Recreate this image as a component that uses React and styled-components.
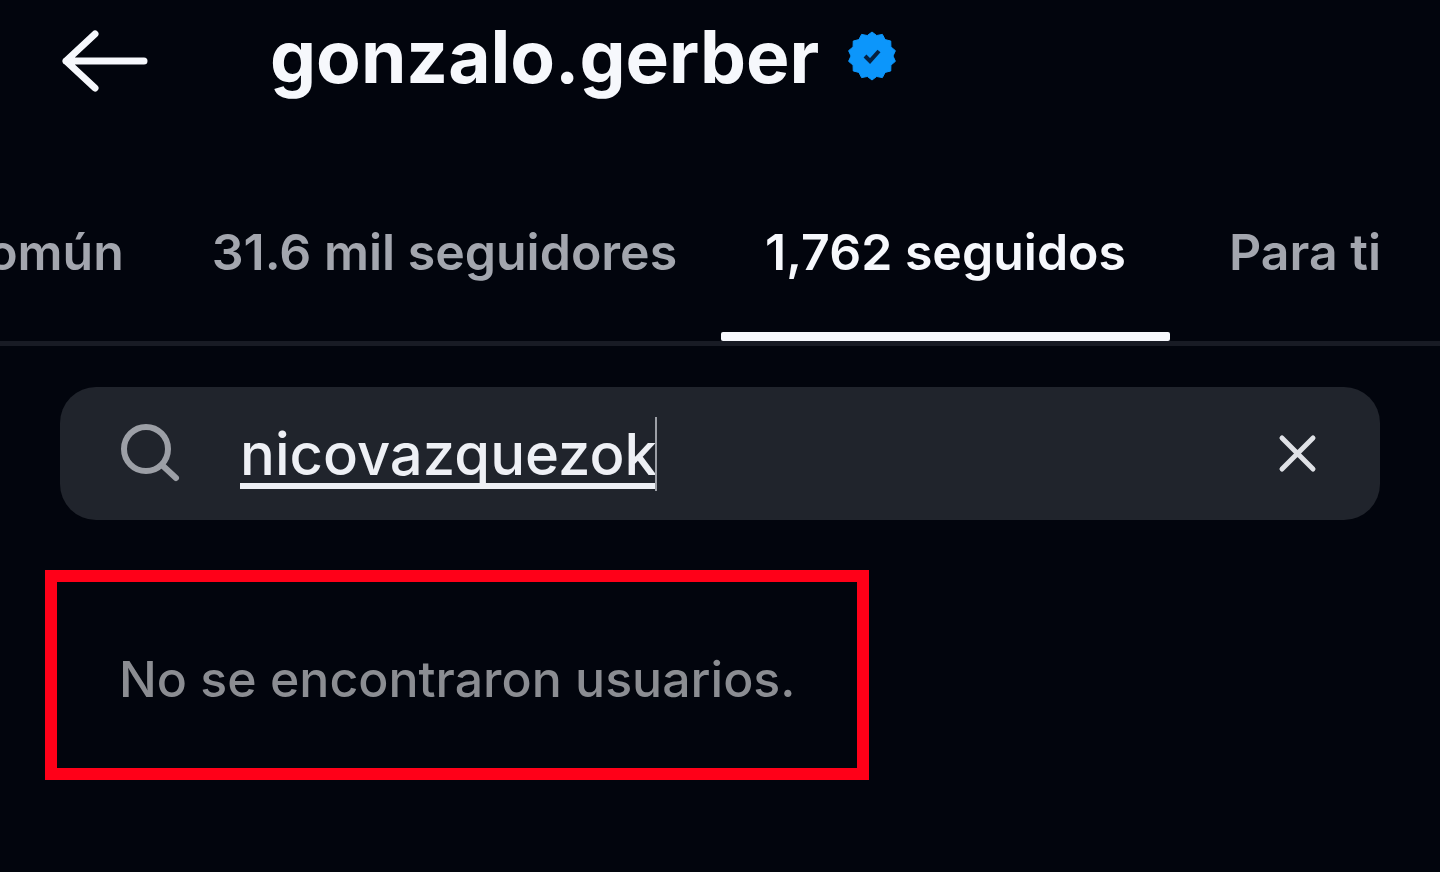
import React, { useState } from "react";
import styled, { createGlobalStyle } from "styled-components";

const GlobalStyle = createGlobalStyle`
  *, *::before, *::after { box-sizing: border-box; }
  body {
    margin: 0;
    background: #02050d;
    color: #f6f8fc;
    font-family: Inter, "Liberation Sans", sans-serif;
    font-weight: 500;
  }
`;

const Page = styled.div`
  min-height: 100vh;
  overflow: hidden;
`;

const Header = styled.header`
  display: flex;
  align-items: center;
  height: 122px;
  padding: 0 60px;
`;

const IconButton = styled.button`
  display: flex;
  flex: none;
  padding: 0;
  border: 0;
  background: none;
  color: ${(p) => p.$color};
  cursor: pointer;
`;

const Username = styled.h1`
  margin: 0 28px 0 120px;
  font-size: 73px;
  font-weight: 700;
  line-height: 114px;
  align-self: flex-start;
`;

const Badge = styled.svg`
  flex: none;
  align-self: flex-start;
  margin-top: 31px;
`;

const Tabs = styled.nav`
  display: flex;
  justify-content: flex-end;
  height: 224px;
  padding-top: 56px;
  overflow: hidden;
  border-bottom: 5px solid #181b24;
`;

const Tab = styled.button`
  position: relative;
  flex: none;
  min-width: ${(p) => (p.$wide ? "270px" : "0")};
  margin: 0;
  padding: 0 44px 16px;
  border: 0;
  background: none;
  color: ${(p) => (p.$active ? "#f6f8fc" : "#a3a6ae")};
  font: inherit;
  font-size: 50px;
  font-weight: 600;
  white-space: nowrap;
  cursor: pointer;

  &::after {
    content: "";
    display: ${(p) => (p.$active ? "block" : "none")};
    position: absolute;
    inset: auto 0 0;
    height: 9px;
    border-radius: 2px;
    background: #f6f8fc;
  }
`;

const SearchBar = styled.form`
  display: flex;
  align-items: center;
  height: 133px;
  margin: 41px 60px 50px;
  padding: 0 60px;
  border-radius: 36px;
  background: #20242c;
`;

const SearchLabel = styled.label`
  display: flex;
  flex: none;
  margin-right: 60px;
  color: #9c9fa6;
`;

const SearchInput = styled.input`
  field-sizing: content;
  min-width: 0;
  height: 80px;
  padding: 0;
  border: 0;
  outline: 0;
  background: none;
  color: #eef0f5;
  font: inherit;
  font-size: 58px;
  text-decoration: underline;
  text-decoration-thickness: 6px;
  text-decoration-skip-ink: none;
  text-underline-offset: 8px;
`;

const Caret = styled.span`
  flex: none;
  width: 2px;
  height: 74px;
  margin: 0 auto 0 -2px;
  background: #9c9fa6;
`;

const Notice = styled.p`
  width: fit-content;
  margin: 0 0 0 45px;
  padding: 66px 62px 58px;
  border: 12px solid #ff0018;
  color: #8b8d92;
  font-size: 50px;
  line-height: 62px;
`;

const tabs = ["común", "31.6 mil seguidores", "1,762 seguidos", "Para ti"];

const badgePoints = Array.from({ length: 28 }, (_, i) => {
  const radius = i % 2 ? 21 : 24;
  const angle = (i * Math.PI) / 14 - Math.PI / 2;
  return `${25 + radius * Math.cos(angle)},${25 + radius * Math.sin(angle)}`;
}).join(" ");

export default function App() {
  const [active, setActive] = useState("1,762 seguidos");
  const [query, setQuery] = useState("nicovazquezok");

  return (
    <Page>
      <GlobalStyle />
      <Header>
        <IconButton $color="#f6f8fc" aria-label="Volver">
          <svg width="90" height="64" viewBox="0 0 90 64" fill="none" stroke="currentColor" strokeWidth="7" strokeLinecap="round" strokeLinejoin="round">
            <path d="M84 32H6M35 5L6 32L35 59" />
          </svg>
        </IconButton>
        <Username>gonzalo.gerber</Username>
        <Badge width="50" height="50" viewBox="0 0 50 50" role="img" aria-label="Verificado">
          <polygon points={badgePoints} fill="#0c96fb" stroke="#0c96fb" strokeWidth="1" strokeLinejoin="round" />
          <path d="M18 25L23 30L32 20" fill="none" stroke="#06203f" strokeWidth="4" />
        </Badge>
      </Header>
      <Tabs>
        {tabs.map((name) => (
          <Tab key={name} $active={name === active} $wide={name === "Para ti"} onClick={() => setActive(name)}>
            {name}
          </Tab>
        ))}
      </Tabs>
      <main>
        <SearchBar onSubmit={(e) => e.preventDefault()}>
          <SearchLabel htmlFor="search" aria-label="Buscar">
            <svg width="60" height="60" viewBox="0 0 60 60" fill="none" stroke="currentColor" strokeWidth="6" strokeLinecap="round">
              <circle cx="26" cy="25" r="22" />
              <path d="M42 41L56 54" />
            </svg>
          </SearchLabel>
          <SearchInput id="search" type="text" spellCheck={false} value={query} onChange={(e) => setQuery(e.target.value)} />
          <Caret />
          <IconButton type="button" $color="#dfe1e6" aria-label="Borrar" onClick={() => setQuery("")}>
            <svg width="46" height="46" viewBox="0 0 46 46" fill="none" stroke="currentColor" strokeWidth="5" strokeLinecap="round">
              <path d="M8 7L39 38M39 7L8 38" />
            </svg>
          </IconButton>
        </SearchBar>
        <Notice>No se encontraron usuarios.</Notice>
      </main>
    </Page>
  );
}
